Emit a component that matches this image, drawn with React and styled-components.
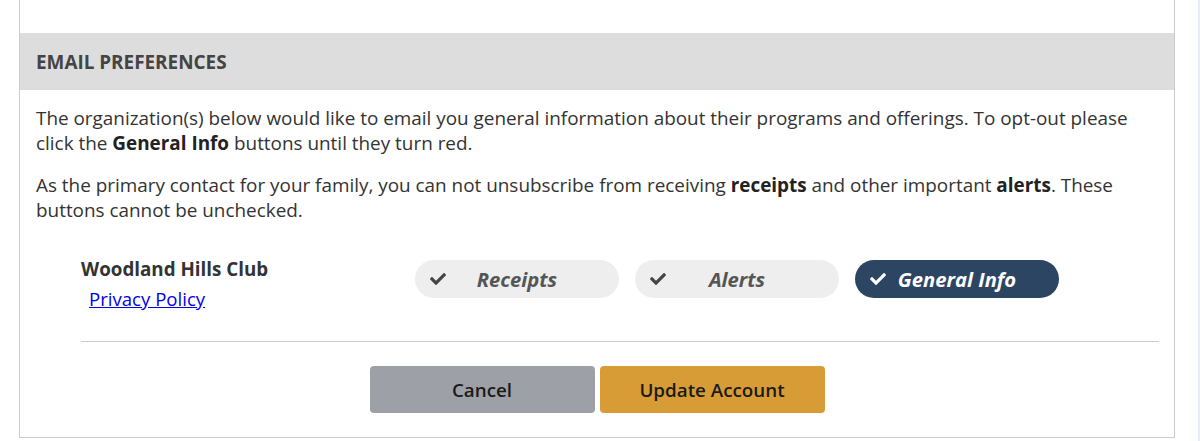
import styled, { createGlobalStyle } from 'styled-components';
import { FaCheck } from 'react-icons/fa';

const GlobalStyle = createGlobalStyle`
  html, body {
    margin: 0;
    padding: 0;
    background: #fff;
    font-family: "Open Sans", "Liberation Sans", sans-serif;
    color: #333;
  }
`;

const Page = styled.div`
  display: flex;
  height: 441px;
  overflow: hidden;
`;

const Main = styled.main`
  flex: 1;
  padding-left: 19px;
`;

const Edge = styled.div`
  width: 2px;
  background: #e6ecfa;
`;

const Panel = styled.section`
  width: 1156px;
  box-sizing: border-box;
  margin-top: -1px;
  border: 1px solid #cccccc;
  background: #fff;
`;

const TopGap = styled.div`
  height: 33px;
`;

const Header = styled.h2`
  margin: 0;
  height: 57px;
  display: flex;
  align-items: center;
  padding-left: 16px;
  background: #dddddd;
  color: #444;
  font-size: 18.9px;
  font-weight: 700;
`;

const Body = styled.div`
  padding: 16px 16px 0 16px;
`;

const Para = styled.p`
  margin: 0 0 17px;
  font-size: 18.9px;
  line-height: 25px;
  color: #333;

  &:last-child {
    margin-bottom: 0;
  }

  b {
    font-weight: 700;
    color: #222;
  }
`;

const OrgList = styled.div`
  margin: 12px 15px 0 61px;
  border-bottom: 1px solid #cccccc;
`;

const OrgRow = styled.div`
  display: grid;
  grid-template-columns: 334px 1fr;
  padding-top: 22px;
  padding-bottom: 30px;
`;

const OrgInfo = styled.div`
  display: flex;
  flex-direction: column;
`;

const OrgName = styled.div`
  font-size: 18.8px;
  font-weight: 700;
  line-height: 25px;
  color: #333;
`;

const PolicyLink = styled.a`
  margin: 4px 0 0 8px;
  font-size: 18.6px;
  line-height: 25px;
  color: #0000ee;
  text-decoration: underline;
`;

const Pills = styled.div`
  display: flex;
  gap: 16px;
  padding-top: 3px;
`;

const Pill = styled.button`
  width: 204px;
  height: 38px;
  border: none;
  border-radius: 19px;
  padding: 0 15px;
  display: grid;
  grid-template-columns: 1fr auto 1fr;
  align-items: center;
  background: ${(p) => (p.$on ? '#2c4563' : '#eeeeee')};
  color: ${(p) => (p.$on ? '#ffffff' : '#555555')};
  font-family: "Open Sans", "Liberation Sans", sans-serif;
  font-size: 20.2px;
  font-weight: 700;
  font-style: italic;
  cursor: pointer;

  svg {
    justify-self: start;
    width: 16px;
    height: 16px;
    color: ${(p) => (p.$on ? '#ffffff' : '#444444')};
  }
`;

const Actions = styled.div`
  display: flex;
  justify-content: center;
  gap: 5px;
  padding: 24px 0 24px;
`;

const Button = styled.button`
  width: 225px;
  height: 47px;
  border: none;
  border-radius: 4px;
  background: ${(p) => (p.$primary ? '#d89c36' : '#9da1a7')};
  color: #1a1a1a;
  font-family: "Open Sans", "Liberation Sans", sans-serif;
  font-size: 18.8px;
  font-weight: 600;
  cursor: pointer;
`;

const prefs = [
  { label: 'Receipts', on: false },
  { label: 'Alerts', on: false },
  { label: 'General Info', on: true },
];

export default function App() {
  return (
    <>
      <GlobalStyle />
      <Page>
        <Main>
          <Panel>
            <TopGap />
            <Header>EMAIL PREFERENCES</Header>
            <Body>
              <Para>
                The organization(s) below would like to email you general information about their programs and offerings. To opt-out please click the <b>General Info</b> buttons until they turn red.
              </Para>
              <Para>
                As the primary contact for your family, you can not unsubscribe from receiving <b>receipts</b> and other important <b>alerts</b>. These buttons cannot be unchecked.
              </Para>
            </Body>
            <OrgList>
              <OrgRow>
                <OrgInfo>
                  <OrgName>Woodland Hills Club</OrgName>
                  <PolicyLink href="#">Privacy Policy</PolicyLink>
                </OrgInfo>
                <Pills>
                  {prefs.map((p) => (
                    <Pill key={p.label} $on={p.on}>
                      <FaCheck />
                      <span>{p.label}</span>
                      <span />
                    </Pill>
                  ))}
                </Pills>
              </OrgRow>
            </OrgList>
            <Actions>
              <Button>Cancel</Button>
              <Button $primary>Update Account</Button>
            </Actions>
          </Panel>
        </Main>
        <Edge />
      </Page>
    </>
  );
}
